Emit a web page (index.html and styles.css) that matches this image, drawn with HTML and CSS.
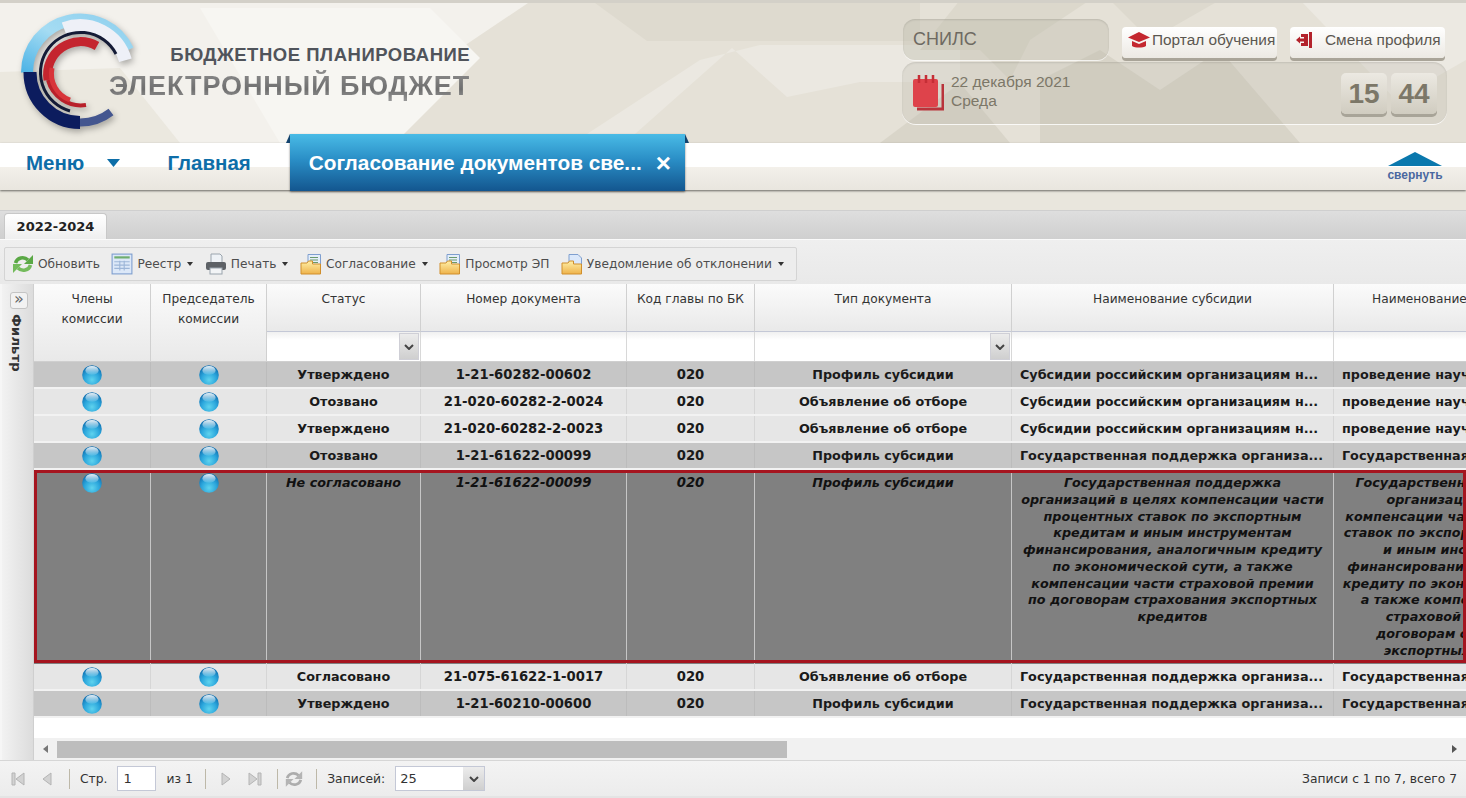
FILE: index.html
```html
<!DOCTYPE html>
<html lang="ru">
<head>
<meta charset="utf-8">
<title>Электронный бюджет</title>
<link rel="stylesheet" href="styles.css">
</head>
<body>
<svg class="defs" width="0" height="0" aria-hidden="true">
  <defs>
    <radialGradient id="ballG" cx="50%" cy="75%" r="70%">
      <stop offset="0" stop-color="#5fd3ee"/><stop offset=".55" stop-color="#2ba6dc"/><stop offset="1" stop-color="#0f6fb0"/>
    </radialGradient>
    <linearGradient id="ballH" x1="0" y1="0" x2="0" y2="1">
      <stop offset="0" stop-color="#fff" stop-opacity=".9"/><stop offset="1" stop-color="#fff" stop-opacity=".1"/>
    </linearGradient>
    <linearGradient id="foldG" x1="0" y1="0" x2="0" y2="1">
      <stop offset="0" stop-color="#fff0a8"/><stop offset="1" stop-color="#eeb24a"/>
    </linearGradient>
    <linearGradient id="ringG" x1="0" y1="1" x2="1" y2="0">
      <stop offset="0" stop-color="#4fb4e6"/><stop offset=".5" stop-color="#a5dcf3"/><stop offset="1" stop-color="#8fd0ee"/>
    </linearGradient>
    <symbol id="ball" viewBox="0 0 20 20">
      <circle cx="10" cy="10" r="9.800" fill="url(#ballG)"/>
      <ellipse cx="10" cy="5.400" rx="6.600" ry="4.400" fill="url(#ballH)"/>
    </symbol>
    <symbol id="folder" viewBox="0 0 22 22">
      <path d="M8 1.500h12.500v13H8z" fill="#e4eefa" stroke="#7f9fcf"/>
      <path d="M10 4.500h8M10 7h8M10 9.500h8" stroke="#6b9a6b" stroke-width="1.100"/>
      <path d="M1 10h6l1.500-2h4v3h8v10H1z" fill="url(#foldG)" stroke="#d08f2c"/>
    </symbol>
    <symbol id="folder2" viewBox="0 0 22 22">
      <path d="M8 1.500h9l3.500 3.500v9.500H8z" fill="#dbe8fa" stroke="#7f9fcf"/>
      <path d="M1 10h6l1.500-2h4v3h8v10H1z" fill="url(#foldG)" stroke="#d08f2c"/>
    </symbol>
    <symbol id="refreshGrey" viewBox="0 0 22 22">
      <path d="M3.500 10C5 4.500 12 3 16 7" fill="none" stroke="#adadad" stroke-width="3"/>
      <path d="M20 2.500v8.500h-8.500z" fill="#b4b4b4"/>
      <path d="M18.500 12C17 17.500 10 19 6 15" fill="none" stroke="#adadad" stroke-width="3"/>
      <path d="M2 19.500V11h8.500z" fill="#b4b4b4"/>
    </symbol>
    <symbol id="caret" viewBox="0 0 10 6"><path d="M1 1l4 4 4-4" fill="none" stroke="#444" stroke-width="2"/></symbol>
  </defs>
</svg>

<header class="top">
  <svg class="top-bg" viewBox="0 0 1466 143" preserveAspectRatio="none" aria-hidden="true">
    <rect width="1466" height="143" fill="#e5e1d7"/>
    <path d="M0 3h528L320 143H0z" fill="#f3f1ec"/>
    <path d="M200 8h230l50 50-85 85H280z" fill="#f7f6f2"/>
    <path d="M0 72l120-4 60 75H0z" fill="#ebe8df"/>
    <path d="M595 3h325v38H647z" fill="#dedacf"/>
    <path d="M587 134L700 60l60-15h200v37h-100l-73 15-55-49-97 86z" fill="#ebe8e1"/>
    <path d="M880 143l80-60 50 60z" fill="#d9d5c9"/>
    <path d="M960 0h130l-60 40-20 40-30-30h-60z" fill="#dcd8cc"/>
    <path d="M1040 80l60-30 60 40 60-40 80 93h-260z" fill="#d8d4c8"/>
    <path d="M1110 0h110l-70 40z" fill="#ddd9ce"/>
    <path d="M1300 0h166v60l-70 40z" fill="#ece9e2"/>
    <rect width="1466" height="3" fill="#d3d0c8"/>
  </svg>

  <div class="brand">
    <svg class="logo" viewBox="0 0 126 126" aria-hidden="true">
      <path d="M9 60.500A53 53 0 0 1 110 38" fill="none" stroke="url(#ringG)" stroke-width="12"/>
      <path d="M46 16.500A47 47 0 0 1 107.400 48.300" fill="none" stroke="#eef0f7" stroke-width="13"/>
      <path d="M12 60A50 50 0 0 0 62 110.500" fill="none" stroke="#0c1c5e" stroke-width="13"/>
      <path d="M62 110.500A50 50 0 0 0 93 100" fill="none" stroke="#44568f" stroke-width="8"/>
      <path d="M98 42A40 40 0 1 0 52 99" fill="none" stroke="#141b36" stroke-width="3"/>
      <path d="M79 34A33 33 0 0 0 30 68" fill="none" stroke="#c4252f" stroke-width="9"/>
      <path d="M30 68A34 34 0 0 0 68 93" fill="none" stroke="#b8202a" stroke-width="4"/>
      <path d="M34 56A28 28 0 0 0 52 88" fill="none" stroke="#d8343a" stroke-width="5"/>
    </svg>
    <div class="brand-text">
      <div class="brand-small">БЮДЖЕТНОЕ ПЛАНИРОВАНИЕ</div>
      <div class="brand-big">ЭЛЕКТРОННЫЙ БЮДЖЕТ</div>
    </div>
  </div>

  <div class="widgets">
    <div class="widgets-row">
      <div class="snils">СНИЛС</div>
      <div class="pill pill-a">
        <svg class="pill-ico" viewBox="0 0 24 18" aria-hidden="true"><path d="M12 1L1 6.500 12 11l11-4.500z" fill="#c4272f"/><path d="M5 10v5c3 2 11 2 14 0v-5l-7 3z" fill="#c4272f"/></svg>
        <span>Портал обучения</span>
      </div>
      <div class="pill pill-b">
        <svg class="pill-ico2" viewBox="0 0 18 18" aria-hidden="true"><path d="M14 1h3v16h-3z" fill="#b3232c"/><path d="M6 3h7v12H6v-3h3V6H6z" fill="#b3232c"/><path d="M1 9l4-3.500V7.500h4v3H5v2z" fill="#b3232c"/></svg>
        <span>Смена профиля</span>
      </div>
    </div>
    <div class="datebox">
      <svg class="cal" viewBox="0 0 32 38" aria-hidden="true">
        <path d="M5 35h26V10" fill="none" stroke="#b9333b" stroke-width="3"/>
        <rect x="1" y="5" width="25" height="28" rx="2" fill="#de434b"/>
        <path d="M7 1v8M14 1v8M21 1v8" stroke="#c52e36" stroke-width="2.500"/>
      </svg>
      <div class="date-text"><div>22 декабря 2021</div><div>Среда</div></div>
      <div class="clock"><span class="digit">15</span><span class="digit">44</span></div>
    </div>
  </div>
</header>

<nav class="menubar">
  <a class="menu-link menu-main">Меню<svg class="menu-caret" viewBox="0 0 13 8" aria-hidden="true"><path d="M0 0h13L6.500 8z" fill="#0d6ea8"/></svg></a>
  <a class="menu-link menu-home">Главная</a>
  <div class="active-tab"><span class="active-label">Согласование документов све...</span><span class="active-x">×</span></div>
  <div class="collapse">
    <svg class="collapse-ico" viewBox="0 0 54 14" aria-hidden="true"><path d="M27 0l27 14H0z" fill="#0a78ad"/></svg>
    <span>свернуть</span>
  </div>
</nav>

<main class="panel">
  <div class="tabstrip"><div class="year-tab">2022-2024</div></div>

  <div class="toolbar-wrap">
    <div class="toolbar">
      <span class="tool">
        <svg class="ticon" viewBox="0 0 22 22" aria-hidden="true"><path d="M3.500 10C5 4.500 12 3 16 7" fill="none" stroke="#5aa845" stroke-width="3.500"/><path d="M21 2v9h-9z" fill="#5aa845"/><path d="M18.500 12C17 17.500 10 19 6 15" fill="none" stroke="#74bb5c" stroke-width="3.500"/><path d="M1 20v-9h9z" fill="#74bb5c"/></svg>Обновить</span>
      <span class="tool">
        <svg class="ticon" viewBox="0 0 20 20" aria-hidden="true"><rect x="1" y="1" width="18" height="18" fill="#dce8f8" stroke="#7f9fcf"/><path d="M3 4h14" stroke="#6fae6f" stroke-width="2"/><path d="M3 8h14M3 11h14M3 14h14M8 7v9M12 7v9" stroke="#9db6d8"/></svg>Реестр<i class="down"></i></span>
      <span class="tool">
        <svg class="ticon" viewBox="0 0 22 22" aria-hidden="true"><path d="M6 1h9l2 2v7H6z" fill="#eef2f6" stroke="#9aa4ad"/><rect x="1" y="9" width="20" height="8" rx="2" fill="#5d6166"/><rect x="5" y="15" width="12" height="6" fill="#f2f4f6" stroke="#9aa4ad"/></svg>Печать<i class="down"></i></span>
      <span class="tool"><svg class="ticon" aria-hidden="true"><use href="#folder"/></svg>Согласование<i class="down"></i></span>
      <span class="tool"><svg class="ticon" aria-hidden="true"><use href="#folder"/></svg>Просмотр ЭП</span>
      <span class="tool"><svg class="ticon" aria-hidden="true"><use href="#folder2"/></svg>Уведомление об отклонении<i class="down"></i></span>
    </div>
  </div>

  <div class="workarea">
    <aside class="filter-side">
      <div class="filter-btn">»</div>
      <div class="filter-label">Фильтр</div>
    </aside>
    <section class="grid">
      <div class="grid-view">
        <div class="head">
          <div class="hcell span2">Члены<br>комиссии</div>
          <div class="hcell span2">Председатель<br>комиссии</div>
          <div class="hcell">Статус</div>
          <div class="hcell">Номер документа</div>
          <div class="hcell">Код главы по БК</div>
          <div class="hcell">Тип документа</div>
          <div class="hcell">Наименование субсидии</div>
          <div class="hcell">Наименование мероприятия</div>
          <div class="fcell"><span class="ftrig"><svg class="caret" aria-hidden="true"><use href="#caret"/></svg></span></div>
          <div class="fcell"></div>
          <div class="fcell"></div>
          <div class="fcell"><span class="ftrig"><svg class="caret" aria-hidden="true"><use href="#caret"/></svg></span></div>
          <div class="fcell"></div>
          <div class="fcell"></div>
        </div>

        <div class="row dark">
          <div class="cell"><svg class="ball" aria-hidden="true"><use href="#ball"/></svg></div>
          <div class="cell"><svg class="ball" aria-hidden="true"><use href="#ball"/></svg></div>
          <div class="cell">Утверждено</div><div class="cell num">1-21-60282-00602</div><div class="cell num">020</div><div class="cell">Профиль субсидии</div>
          <div class="cell left">Субсидии российским организациям н...</div><div class="cell left">проведение научно-исследовательских</div>
        </div>
        <div class="row light">
          <div class="cell"><svg class="ball" aria-hidden="true"><use href="#ball"/></svg></div>
          <div class="cell"><svg class="ball" aria-hidden="true"><use href="#ball"/></svg></div>
          <div class="cell">Отозвано</div><div class="cell num">21-020-60282-2-0024</div><div class="cell num">020</div><div class="cell">Объявление об отборе</div>
          <div class="cell left">Субсидии российским организациям н...</div><div class="cell left">проведение научно-исследовательских</div>
        </div>
        <div class="row light">
          <div class="cell"><svg class="ball" aria-hidden="true"><use href="#ball"/></svg></div>
          <div class="cell"><svg class="ball" aria-hidden="true"><use href="#ball"/></svg></div>
          <div class="cell">Утверждено</div><div class="cell num">21-020-60282-2-0023</div><div class="cell num">020</div><div class="cell">Объявление об отборе</div>
          <div class="cell left">Субсидии российским организациям н...</div><div class="cell left">проведение научно-исследовательских</div>
        </div>
        <div class="row dark">
          <div class="cell"><svg class="ball" aria-hidden="true"><use href="#ball"/></svg></div>
          <div class="cell"><svg class="ball" aria-hidden="true"><use href="#ball"/></svg></div>
          <div class="cell">Отозвано</div><div class="cell num">1-21-61622-00099</div><div class="cell num">020</div><div class="cell">Профиль субсидии</div>
          <div class="cell left">Государственная поддержка организа...</div><div class="cell left">Государственная поддержка организаций</div>
        </div>
        <div class="row selected">
          <div class="cell"><svg class="ball" aria-hidden="true"><use href="#ball"/></svg></div>
          <div class="cell"><svg class="ball" aria-hidden="true"><use href="#ball"/></svg></div>
          <div class="cell">Не согласовано</div><div class="cell num">1-21-61622-00099</div><div class="cell num">020</div><div class="cell">Профиль субсидии</div>
          <div class="cell">Государственная поддержка<br>организаций в целях компенсации части<br>процентных ставок по экспортным<br>кредитам и иным инструментам<br>финансирования, аналогичным кредиту<br>по экономической сути, а также<br>компенсации части страховой премии<br>по договорам страхования экспортных<br>кредитов</div>
          <div class="cell">Государственная поддержка<br>организаций в целях<br>компенсации части процентных<br>ставок по экспортным кредитам<br>и иным инструментам<br>финансирования, аналогичным<br>кредиту по экономической сути,<br>а также компенсации части<br>страховой премии по<br>договорам страхования<br>экспортных кредитов</div>
        </div>
        <div class="row light">
          <div class="cell"><svg class="ball" aria-hidden="true"><use href="#ball"/></svg></div>
          <div class="cell"><svg class="ball" aria-hidden="true"><use href="#ball"/></svg></div>
          <div class="cell">Согласовано</div><div class="cell num">21-075-61622-1-0017</div><div class="cell num">020</div><div class="cell">Объявление об отборе</div>
          <div class="cell left">Государственная поддержка организа...</div><div class="cell left">Государственная поддержка организаций</div>
        </div>
        <div class="row dark">
          <div class="cell"><svg class="ball" aria-hidden="true"><use href="#ball"/></svg></div>
          <div class="cell"><svg class="ball" aria-hidden="true"><use href="#ball"/></svg></div>
          <div class="cell">Утверждено</div><div class="cell num">1-21-60210-00600</div><div class="cell num">020</div><div class="cell">Профиль субсидии</div>
          <div class="cell left">Государственная поддержка организа...</div><div class="cell left">Государственная поддержка организаций</div>
        </div>
      </div>
      <div class="hscroll">
        <i class="arrow arrow-l"></i>
        <div class="track"><div class="thumb"></div></div>
        <i class="arrow arrow-r"></i>
      </div>
    </section>
  </div>

  <footer class="pager">
    <svg class="pg" viewBox="0 0 16 16" aria-hidden="true"><path d="M2 2h3v12H2zM14 2v12L6 8z" fill="#d2d2d2" stroke="#b4b4b4"/></svg>
    <svg class="pg" viewBox="0 0 16 16" aria-hidden="true"><path d="M12 2v12L4 8z" fill="#d2d2d2" stroke="#b4b4b4"/></svg>
    <i class="sep"></i>
    <span>Стр.</span>
    <span class="pageinput">1</span>
    <span>из 1</span>
    <i class="sep"></i>
    <svg class="pg" viewBox="0 0 16 16" aria-hidden="true"><path d="M4 2v12l8-6z" fill="#d2d2d2" stroke="#b4b4b4"/></svg>
    <svg class="pg" viewBox="0 0 16 16" aria-hidden="true"><path d="M14 2h-3v12h3zM2 2v12l8-6z" fill="#d2d2d2" stroke="#b4b4b4"/></svg>
    <i class="sep"></i>
    <svg class="pg-r" aria-hidden="true"><use href="#refreshGrey"/></svg>
    <i class="sep"></i>
    <span>Записей:</span>
    <span class="combo"><span class="combo-v">25</span><span class="combo-t"><svg class="caret" aria-hidden="true"><use href="#caret"/></svg></span></span>
    <span class="pager-info">Записи с 1 по 7, всего 7</span>
  </footer>
</main>
</body>
</html>
```

FILE: styles.css
```css
* { box-sizing: border-box; }
html, body { margin: 0; height: 100%; }
body {
  width: 1466px; height: 798px; overflow: hidden;
  background: #e9e6dd;
  font-family: "DejaVu Sans", sans-serif;
  font-size: 12px; color: #222;
  display: flex; flex-direction: column;
}
.defs { position: absolute; }

/* header */
.top { position: relative; height: 143px; flex: none; display: flex; justify-content: space-between; overflow: hidden; }
.top-bg { position: absolute; left: 0; top: 0; width: 100%; height: 100%; }
.brand { position: relative; display: flex; padding: 12px 0 0 18px; }
.logo { width: 126px; height: 126px; flex: none; filter: drop-shadow(2px 3px 3px rgba(0,0,0,.3)); }
.brand-text { margin-left: -35px; padding-top: 32px; display: flex; flex-direction: column; align-items: flex-end; }
.brand-small { font: bold 18.500px/22px "Liberation Sans", sans-serif; color: #50545b; letter-spacing: .53px; }
.brand-big { font: bold 27px/32px "Liberation Sans", sans-serif; letter-spacing: .93px; margin-top: 4px;
  background: linear-gradient(#8e8e8e, #6f6f6f 60%, #9a9a9a); -webkit-background-clip: text; background-clip: text; color: transparent; }

.widgets { position: relative; width: 545px; margin: 19px 19px 0 0; display: flex; flex-direction: column; gap: 2px; }
.widgets-row { display: flex; align-items: flex-start; height: 41px; }
.snils { width: 206px; height: 41px; margin-left: 1px; border-radius: 12px; background: rgba(190,186,172,.38); box-shadow: inset 0 1px 2px rgba(0,0,0,.12), 0 1px 0 rgba(255,255,255,.7);
  font: 18px/41px "Liberation Sans", sans-serif; color: #6e6a62; padding-left: 10px; }
.pill { height: 31px; margin-top: 8px; width: 155px; border-radius: 4px; display: flex; align-items: center; white-space: nowrap;
  background: linear-gradient(#fff, #ece9e3); box-shadow: 0 3px 0 #a9a498;
  font: 15.400px/28px "Liberation Sans", sans-serif; color: #5b5750; padding-bottom: 5px; }
.pill-a { margin-left: 13px; padding-left: 5px; gap: 1px; }
.pill-b { margin-left: 13px; padding-left: 5px; gap: 12px; }
.pill-ico { width: 24px; height: 18px; flex: none; }
.pill-ico2 { width: 18px; height: 18px; flex: none; }

.datebox { height: 62px; border-radius: 14px; display: flex; align-items: center; padding: 0 10px;
  background: rgba(190,186,172,.3); box-shadow: inset 0 1px 2px rgba(0,0,0,.1), 0 1px 0 rgba(255,255,255,.8); }
.cal { width: 32px; height: 38px; flex: none; }
.date-text { margin: -4px 0 0 7px; font: 15.500px/19.500px "Liberation Sans", sans-serif; color: #7c7768; flex: 1; }
.clock { display: flex; gap: 4px; }
.digit { width: 46px; height: 41px; border-radius: 5px; text-align: center; background: linear-gradient(#ece9e2, #d0ccc0);
  box-shadow: 0 3px 0 #a8a498; font: bold 28px/41px "Liberation Sans", sans-serif; color: #7c7768; }

/* menu */
.menubar { position: relative; height: 47px; flex: none; display: flex; align-items: flex-start;
  background: linear-gradient(#fff 0, #fff 24px, #f3f0ea 24px, #e9e6df 46px);
  box-shadow: 0 1px 2px rgba(0,0,0,.55); }
.menu-link { font: bold 20.500px/39px "Liberation Sans", sans-serif; color: #0e6ea8; }
.menu-main { margin-left: 26px; display: flex; align-items: center; gap: 23px; }
.menu-caret { width: 13px; height: 8px; margin-top: 1px; }
.menu-home { margin-left: 47px; }
.active-tab { position: relative; margin: -9px 0 0 39px; width: 395px; height: 57px; padding: 9px 0 0 19px; display: flex; align-items: flex-start; color: #fff;
  background: linear-gradient(#49bbe6, #2a8ec6 45%, #13568f); box-shadow: 0 1px 2px rgba(0,0,0,.5); }
.active-tab::before, .active-tab::after { content: ""; position: absolute; top: 0; border-style: solid; }
.active-tab::before { left: -4px; border-width: 0 0 9px 4px; border-color: transparent transparent #12436e transparent; }
.active-tab::after { right: -4px; border-width: 9px 0 0 4px; border-color: transparent transparent transparent #12436e; }
.active-label { font: bold 20.800px/39px "Liberation Sans", sans-serif; white-space: nowrap; }
.active-x { margin-left: 14px; font: bold 26px/41px "Liberation Sans", sans-serif; }
.collapse { margin-left: auto; margin-right: 24px; padding-top: 9px; width: 54px; display: flex; flex-direction: column; align-items: center; color: #4a68a0; font: bold 12px/18px "Liberation Sans", sans-serif; }
.collapse-ico { width: 54px; height: 14px; display: block; }

/* panel */
.panel { margin-top: 20px; flex: 1; min-height: 0; display: flex; flex-direction: column; background: #e4e4e4; border-top: 1px solid #cfcfcf; }
.tabstrip { height: 28px; flex: none; padding: 2px 0 0 4px; background: linear-gradient(#dedede, #cfcfcf); }
.year-tab { width: 103px; height: 26px; border: 1px solid #c8c8c8; border-bottom: 0; border-radius: 4px 4px 0 0; background: linear-gradient(#fff, #efefef); text-align: center;
  font-weight: bold; font-size: 13px; line-height: 25px; color: #222; }
.toolbar-wrap { height: 45px; flex: none; padding: 7px 0 0 4px; background: linear-gradient(#efefef, #e9e9e9); border-top: 1px solid #fafafa; }
.toolbar { width: 793px; height: 34px; border: 1px solid #d4d4d4; border-radius: 2px; background: #ededed; display: flex; align-items: center; padding-left: 7px; gap: 11.500px; color: #4d4d4d; white-space: nowrap; font-size: 12.200px; }
.tool { display: flex; align-items: center; gap: 4px; }
.ticon { width: 22px; height: 22px; flex: none; }
.down { width: 0; height: 0; margin-left: 2px; border: 3.500px solid transparent; border-top: 4px solid #333; border-bottom: 0; }

.workarea { flex: 1; min-height: 0; display: flex; background: #e5e5e5; }
.filter-side { width: 34px; flex: none; padding: 8px 0 0 8px; background: linear-gradient(90deg, #f2f2f2, #dcdcdc); border-left: 2px solid #f6f6f6; display: flex; flex-direction: column; align-items: flex-start; gap: 5px; border-right: 1px solid #cfcfcf; }
.filter-btn { width: 18px; height: 17px; background: #f2f2f2; border: 1px solid #c4c4c4; border-radius: 3px; text-align: center; font: 16px/12px "DejaVu Sans", sans-serif; color: #666; }
.filter-label { writing-mode: vertical-rl; font-weight: bold; font-size: 13px; letter-spacing: .2px; color: #333; line-height: 13px; }

.grid { flex: 1; min-width: 0; display: flex; flex-direction: column; background: #fff; }
.grid-view { flex: 1; min-height: 0; overflow: hidden; }
.head, .row { display: grid; grid-template-columns: 117px 116px 154px 206px 128px 257px 322px 261px; }
.head { grid-template-rows: 48px 29px; height: 78px; background: #fff; border-bottom: 1px solid #cfcfcf; font-size: 12.200px; }
.hcell { padding-top: 6px; text-align: center; line-height: 19.500px; color: #333; white-space: nowrap; overflow: hidden; background: linear-gradient(#fbfbfb, #e9e9e9); border-right: 1px solid #d0d0d0; border-bottom: 1px solid #c4c8d6; }
.span2 { grid-row: span 2; border-bottom: 0; }
.fcell { background: linear-gradient(#f0f0f0, #fff 8px); border-right: 1px solid #d8d8d8; display: flex; justify-content: flex-end; }
.ftrig { width: 20px; height: 27px; margin: 1px 1px 0 0; background: linear-gradient(#ececec, #cfcfcf); border: 1px solid #cfcfd6; display: flex; align-items: center; justify-content: center; }
.caret { width: 10px; height: 6px; display: block; }

.row { position: relative; height: 27px; overflow: hidden; font-weight: bold; font-size: 12.750px; color: #1a1a1a; border-bottom: 2px solid #f2f2f2; }
.row.dark { background: #c6c6c6; }
.row.light { background: #e6e6e6; }
.row.selected { height: 194px; background: #808080; font-style: italic; color: #111; border-bottom: 0; }
.row.selected::after { content: ""; position: absolute; inset: 0 0 1px 0; border: 3px solid #a5151f; }
.cell { padding-top: 3px; text-align: center; white-space: nowrap; overflow: hidden; border-right: 1px solid #d6d6d6; line-height: 19px; }
.num { font-size: 13.200px; }
.row.selected .cell { padding-top: 5px; line-height: 16.750px; border-right-color: #c6c6c6; }
.row.dark .cell { border-right-color: #bcbcbc; }
.cell.left { text-align: left; padding-left: 8px; }
.ball { width: 20px; height: 20px; display: block; margin: 0 auto; }
.row .cell:nth-child(-n+2) { padding-top: 3px; }
.row.selected .cell:nth-child(-n+2) { padding-top: 3px; }

.hscroll { height: 22px; flex: none; display: flex; align-items: center; background: #f1f1f1; }
.arrow { width: 23px; flex: none; display: flex; justify-content: center; }
.arrow::before { content: ""; border: 4px solid transparent; }
.arrow-l::before { border-right: 5px solid #777; border-left: 0; }
.arrow-r::before { border-left: 5px solid #555; border-right: 0; }
.track { flex: 1; height: 17px; }
.thumb { width: 730px; height: 17px; background: #bdbdbd; }

.pager { height: 36px; flex: none; margin-bottom: 2px; display: flex; align-items: center; padding: 0 9px 0 8.500px; gap: 10px; background: linear-gradient(#f3f3f3, #ececec); border-top: 1px solid #d6d6d6; color: #333; white-space: nowrap; font-size: 12.300px; }
.pg { width: 16px; height: 16px; flex: none; margin: 0 1.500px; }
.pg-r { width: 20px; height: 22px; flex: none; margin-left: -4px; }
.sep { width: 1px; height: 20px; background: #bdb8a8; flex: none; margin-left: 2.500px; }
.pageinput { width: 39px; height: 25px; border: 1px solid #c4c8d6; background: #fff; padding-left: 5px; line-height: 24px; font-size: 13px; }
.combo { width: 90px; height: 25px; display: flex; border: 1px solid #c4c8d6; background: #fff; }
.combo-v { flex: 1; padding-left: 4px; line-height: 23px; font-size: 13px; }
.combo-t { width: 21px; background: linear-gradient(#ececec, #cfcfcf); display: flex; align-items: center; justify-content: center; }
.pager-info { margin-left: auto; }
```
